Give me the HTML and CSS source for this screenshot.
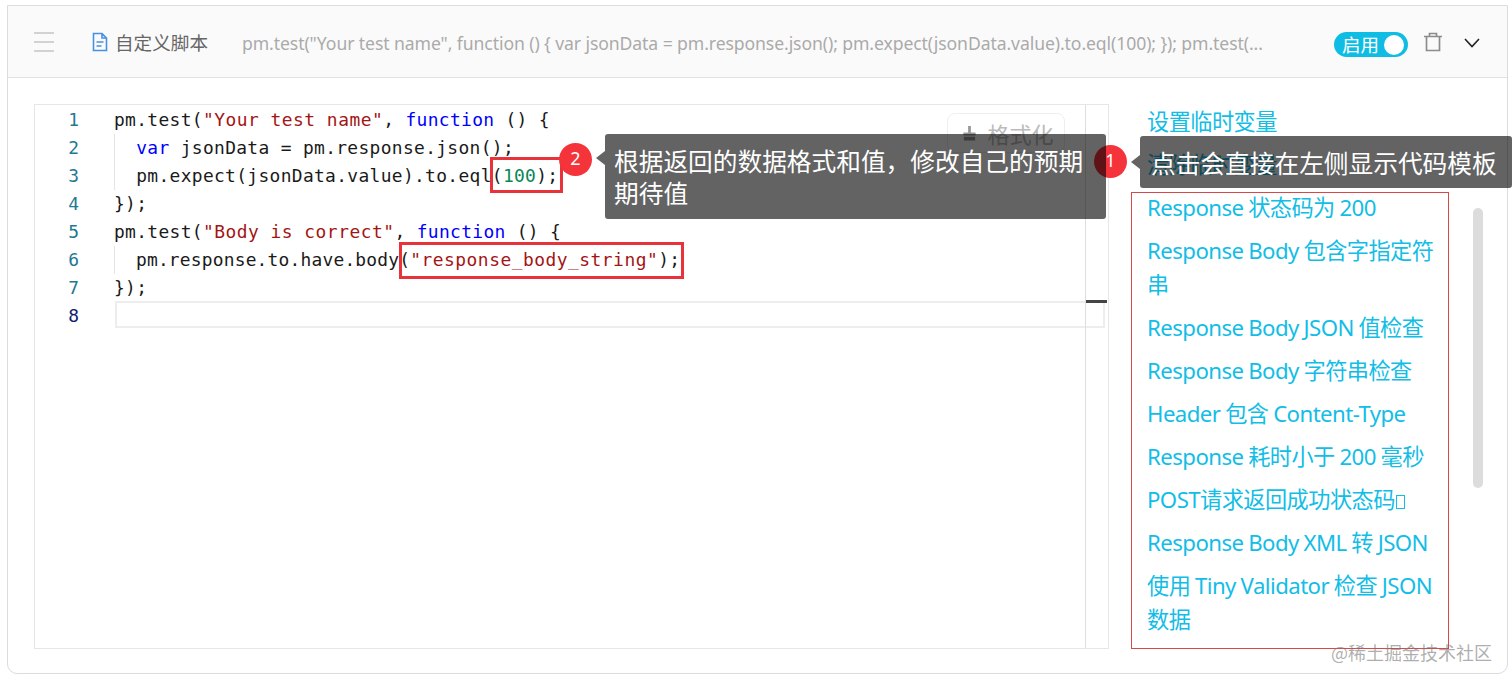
FILE: index.html
```html
<!DOCTYPE html>
<html lang="zh">
<head>
<meta charset="utf-8">
<title>自定义脚本</title>
<link rel="stylesheet" href="styles.css">
</head>
<body>
<div class="card">
  <header class="head">
    <div class="burger"><span></span><span></span><span></span></div>
    <svg class="file" viewBox="0 0 16 20" width="16" height="20"><path d="M1.500 1.500h8.500l4.500 4.500v12.500h-13z M10 1.500v4.500h4.500 M4.500 10h7 M4.500 14h5" fill="none" stroke="#4a90e2" stroke-width="1.600"/></svg>
    <span class="title">自定义脚本</span>
    <span class="preview">pm.test("Your test name", function () { var jsonData = pm.response.json(); pm.expect(jsonData.value).to.eql(100); }); pm.test(...</span>
    <div class="toggle"><span>启用</span><i></i></div>
    <svg class="trash" viewBox="0 0 20 20" width="20" height="20"><path d="M1 4.500h18 M6.500 4.500v-3h7v3 M3.500 4.500v14h13v-14" fill="none" stroke="#8c8c8c" stroke-width="1.700"/></svg>
    <svg class="chev" viewBox="0 0 16 10" width="16" height="10"><path d="M1 1l7 7.500 7-7.500" fill="none" stroke="#222" stroke-width="1.600"/></svg>
  </header>
  <main class="body">
    <section class="editor">
      <div class="gutter">
        <div>1</div><div>2</div><div>3</div><div>4</div><div>5</div><div>6</div><div>7</div><div class="cur">8</div>
      </div>
      <div class="code">
        <div class="ln">pm.test(<b class="s">"Your test name"</b>, <b class="k">function</b> () {</div>
        <div class="ln ind">  <b class="k">var</b> jsonData = pm.response.json();</div>
        <div class="ln ind">  pm.expect(jsonData.value).to.eql(<b class="n">100</b>);</div>
        <div class="ln">});</div>
        <div class="ln">pm.test(<b class="s">"Body is correct"</b>, <b class="k">function</b> () {</div>
        <div class="ln ind tight">  pm.response.to.have.body(<b class="s">"response_body_string"</b>);</div>
        <div class="ln">});</div>
        <div class="curline"></div>
        <button class="fmt"><svg viewBox="0 0 16 18" width="15" height="17"><path d="M6.500 1h3v7h5v3h-13v-3h5z M2 12.500h12v4h-12z" fill="#999"/></svg>格式化</button>
      </div>
      <div class="mini"><i></i></div>
    </section>
    <nav class="links">
      <a>设置临时变量</a>
      <a>清除临时变量</a>
      <a>Response 状态码为 200</a>
      <a>Response Body 包含字指定符串</a>
      <a>Response Body JSON 值检查</a>
      <a>Response Body 字符串检查</a>
      <a>Header 包含 Content-Type</a>
      <a>Response 耗时小于 200 毫秒</a>
      <a>POST请求返回成功状态码<i class="tofu"></i></a>
      <a>Response Body XML 转 JSON</a>
      <a>使用 Tiny Validator 检查 JSON 数据</a>
    </nav>
    <div class="thumb"></div>
  </main>
</div>
<div class="mark box1"></div>
<div class="mark box2"></div>
<div class="listbox"></div>
<div class="badge b1">1</div>
<div class="badge b2">2</div>
<div class="tip t1">点击会直接在左侧显示代码模板</div>
<div class="tip t2">根据返回的数据格式和值&#xFF0C;修改自己的预期期待值</div>
<div class="wm">@稀土掘金技术社区</div>
</body>
</html>
```
FILE: styles.css
```css
* { box-sizing: border-box; }
html, body { margin: 0; height: 682px; overflow: hidden; background: #fff; }
body { padding: 5px 4px 0 7px; position: relative; font-family: "Noto Sans", "Noto Sans CJK SC", sans-serif; }
.card { height: 669px; border: 1px solid #dcdcdc; border-radius: 0 0 10px 10px; overflow: hidden; }
.head { height: 72px; background: #fafafa; border-bottom: 1px solid #e2e2e2; display: flex; align-items: center; padding-left: 26px; }
.burger { width: 20px; height: 20px; display: flex; flex-direction: column; justify-content: space-between; margin-right: 38px; margin-top: 1px; }
.burger span { height: 2px; background: #d2d2d2; }
.file { flex: none; margin-right: 7px; }
.title { font-size: 18.600px; color: #666; width: 127px; flex: none; }
.preview { font-size: 17.600px; color: #aaa; width: 1092px; flex: none; white-space: nowrap; overflow: hidden; padding-top: 2px; letter-spacing: -.09px; }
.toggle { flex: none; width: 74px; height: 25px; border-radius: 13px; background: #0fbde4; display: flex; align-items: center; padding: 0 4px 0 8px; justify-content: space-between; margin-top: 6px; }
.toggle span { color: #fff; font-size: 18.500px; line-height: 25px; }
.toggle i { width: 20px; height: 20px; background: #fff; border-radius: 50%; }
.trash { flex: none; margin: 0 0 0 15px; }
.chev { flex: none; margin: 3px 0 0 21px; }
.body { display: flex; padding: 26px 0 0 26px; height: 596px; }
.editor { width: 1075px; height: 545px; border: 1px solid #e6e6e6; display: flex; font-family: "DejaVu Sans Mono", monospace; font-size: 17.900px; line-height: 28px; flex: none; }
.gutter { width: 80px; padding-top: 1px; padding-right: 36px; text-align: right; color: #237893; flex: none; }
.gutter .cur { color: #0b216f; }
.code { flex: 1; padding-top: 1px; position: relative; color: #1a1a1a; letter-spacing: .34px; }
.ln { height: 28px; white-space: pre; margin-left: -1px; }
.tight { letter-spacing: .2px; }
.code b { font-weight: normal; }
.s { color: #a31515; letter-spacing: .5px; }
.k { color: #0000ff; }
.n { color: #098658; }
.ind { background: linear-gradient(#e4e4e4, #e4e4e4) no-repeat 0 0 / 1px 100%; }
.curline { height: 27px; border: 2px solid #ededed; margin: -1px -20px 0 0; }
.fmt { position: absolute; top: 8px; right: 20px; width: 118px; height: 40px; border: 1px solid #eee; border-radius: 8px; background: #fff; color: #bbb; font: 22px "Noto Sans CJK SC", sans-serif; display: flex; align-items: center; justify-content: center; gap: 10px; padding: 0 0 0 4px; }
.mini { width: 23px; flex: none; border-left: 1px solid #dedede; position: relative; }
.mini i { position: absolute; top: 195px; left: 0; width: 21px; height: 3px; background: #444; }
.links { width: 292px; margin-left: 38px; flex: none; display: flex; flex-direction: column; gap: 9px; padding-top: 1px; font-size: 22.200px; letter-spacing: -.55px; word-spacing: -.5px; line-height: 34px; color: #12bde6; }
.tofu { display: inline-block; width: 9px; height: 14px; border: 1px solid #12bde6; margin-left: 1px; vertical-align: -1px; }
.thumb { width: 10px; height: 280px; background: #dcdcdc; border-radius: 5px; margin: 104px 0 0 34px; flex: none; }
.mark { position: absolute; border: 3px solid #e8333a; }
.box1 { left: 490px; top: 157px; width: 73px; height: 36px; }
.box2 { left: 399px; top: 242px; width: 285px; height: 37px; }
.listbox { position: absolute; left: 1131px; top: 192px; width: 318px; height: 457px; border: 1px solid #d84848; }
.badge { position: absolute; width: 33px; height: 33px; border-radius: 50%; background: #f5333a; color: #fff; font-size: 18px; line-height: 31px; text-align: center; }
.b1 { left: 1094px; top: 145px; }
.b2 { left: 559px; top: 143px; }
.tip { position: absolute; background: rgba(0, 0, 0, .61); color: #fff; font-size: 24.700px; line-height: 32px; border-radius: 3px; font-family: "Noto Sans CJK SC", sans-serif; }
.tip::before { content: ""; position: absolute; left: -9px; border: 7px solid transparent; border-left: 0; border-right: 9px solid rgba(0, 0, 0, .61); }
.t1 { left: 1140px; top: 136px; width: 372px; height: 52px; padding: 10px 0 0 11px; white-space: nowrap; }
.t1::before { top: 19px; }
.t2 { left: 605px; top: 134px; width: 501px; height: 85px; padding: 10px 10px 0 9px; }
.t2::before { top: 17px; }
.wm { position: absolute; left: 1331px; top: 639px; font-size: 18px; line-height: 26px; color: rgba(120, 120, 120, .6); font-family: "Noto Sans CJK SC", sans-serif; }
```
